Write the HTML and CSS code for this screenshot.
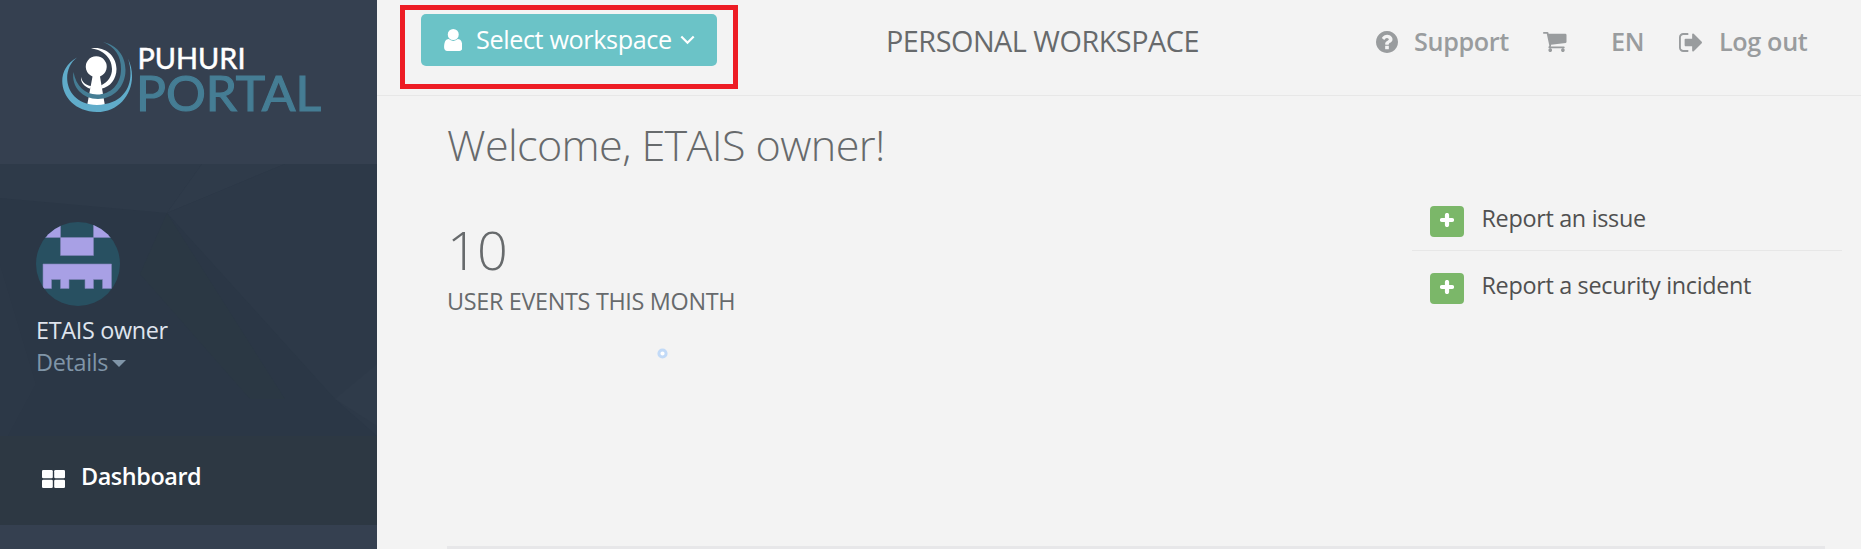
FILE: index.html
```html
<!DOCTYPE html>
<html lang="en">
<head>
<meta charset="utf-8">
<title>Puhuri Portal</title>
<link rel="stylesheet" href="styles.css">
</head>
<body>
<div class="app">
  <aside class="sidebar">
    <div class="brand">
      <svg class="logo" width="270" height="90" viewBox="56 34 270 90">
        <path fill="#fff" d="M92.500 76.500A10.500 10.500 0 1 1 100 76.500L105 106H87Z"/>
        <path fill="#fff" d="M91 48.500C105 46 116.500 56 116.500 69C116.500 79 110 87 101.500 88.800L101 85.500C108 82 112 76.500 112 69C112 58 103 49.500 91 48.500Z"/>
        <path fill="#fff" d="M81 77C82 82 86 85.500 91 86L90.500 88.700C84 87 80.500 82 81 77Z"/>
        <path fill="#457d94" d="M103 42C117 45 125.500 56 125.500 70C125.500 87 113 99 98 99C83 99 71 87 73.500 72C76 86 85 94.500 97 94.500C111 94.500 121 84 121 69C121 56 115 47 103 42Z"/>
        <path fill="#60acca" d="M77 57.500C60 70 64 104.500 97 105C128 104 135 80 128 58.500C140 84 124 112 97 112C62 112 50 72 77 57.500Z"/>
        <text class="logo-top" x="137.500" y="69" textLength="108" lengthAdjust="spacingAndGlyphs">PUHURI</text>
        <text class="logo-bottom" x="136" y="111" textLength="185" lengthAdjust="spacingAndGlyphs">PORTAL</text>
      </svg>
    </div>
    <div class="profile">
      <svg class="facets" viewBox="0 0 377 272" preserveAspectRatio="none">
        <path fill="#2e3a49" d="M0 0H202L167 49L0 34Z"/>
        <path fill="#2f3b4a" d="M202 0H285L167 49Z"/>
        <path fill="#2d3948" d="M285 0H377V272L335 235L167 49Z"/>
        <path fill="#2b3844" d="M167 49L285 235L250 235L140 110Z"/>
        <path fill="#2c3847" d="M0 100L36 220L8 272H0Z"/>
        <path fill="#2f3b4a" d="M377 200L335 235L377 262Z"/>
      </svg>
      <svg class="avatar" width="84" height="84" viewBox="0 0 84 84">
        <clipPath id="round"><circle cx="42" cy="42" r="42"/></clipPath>
        <g clip-path="url(#round)">
          <path fill="#285061" d="M0 0H84V84H0Z"/>
          <path fill="#a8a0e5" stroke="#7f83b8" stroke-width=".6" d="M0 -2H24.500V15.500H0ZM57.500 -2H84V15.500H57.500ZM24.500 15.500H57.500V33.500H24.500ZM7 42H75.500V66.500H66.500V57.500H57.500V66.500H49V57.500H33V66.500H24.500V57.500H15.500V66.500H7Z"/>
        </g>
      </svg>
      <div class="user-name">ETAIS owner</div>
      <div class="details">Details<span class="caret"></span></div>
    </div>
    <a class="menu-item">
      <svg width="23" height="18" viewBox="0 0 23 18" fill="#fff"><rect width="10.800" height="8.300" rx="1.300"/><rect x="12.200" width="10.800" height="8.300" rx="1.300"/><rect y="9.700" width="10.800" height="8.300" rx="1.300"/><rect x="12.200" y="9.700" width="10.800" height="8.300" rx="1.300"/></svg>
      <span>Dashboard</span>
    </a>
  </aside>
  <main class="main">
    <header class="topbar">
      <button class="workspace">
        <svg width="18.500" height="22" viewBox="0 -1408 1280 1536"><path transform="scale(1,-1)" d="M1280 137q0 -109 -62.500 -187t-150.500 -78h-854q-88 0 -150.500 78t-62.500 187q0 85 8.500 160.500t31.500 152t58.500 131t94 89t134.500 34.500q131 -128 313 -128t313 128q76 0 134.500 -34.500t94 -89t58.500 -131t31.500 -152t8.500 -160.500zM1024 1024q0 -159 -112.500 -271.500t-271.500 -112.500t-271.500 112.500t-112.500 271.500t112.500 271.500t271.500 112.500t271.500 -112.500t112.500 -271.500z"/></svg>
        <span class="workspace-label">Select workspace</span>
        <svg class="chevron" width="15" height="10" viewBox="0 0 15 10"><path d="M1.300 1.500L7.500 7.700L13.700 1.500"/></svg>
      </button>
      <div class="highlight"></div>
      <div class="title">PERSONAL WORKSPACE</div>
      <nav class="nav">
        <svg class="i-help" width="22" height="22" viewBox="0 -1408 1536 1536"><path transform="scale(1,-1)" d="M896 160v192q0 14 -9 23t-23 9h-192q-14 0 -23 -9t-9 -23v-192q0 -14 9 -23t23 -9h192q14 0 23 9t9 23zM1152 832q0 88 -55.500 163t-138.500 116t-170 41q-243 0 -371 -213q-15 -24 8 -42l132 -100q7 -6 19 -6q16 0 25 12q53 68 86 92q34 24 86 24q48 0 85.500 -26t37.500 -59q0 -38 -20 -61t-68 -45q-63 -28 -115.500 -86.500t-52.500 -125.500v-36q0 -14 9 -23t23 -9h192q14 0 23 9t9 23q0 19 21.500 49.500t54.500 49.500q32 18 49 28.500t46 35t44.500 48t28 60.500t12.500 81zM1536 640q0 -209 -103 -385.500t-279.500 -279.500t-385.500 -103t-385.500 103t-279.500 279.500t-103 385.500t103 385.500t279.500 279.500t385.500 103t385.500 -103t279.500 -279.500t103 -385.500z"/></svg>
        <span class="n-support">Support</span>
        <svg class="i-cart" width="23.500" height="20" viewBox="0 -1280 1664 1408"><path transform="scale(1,-1)" d="M640 0q0 -52 -38 -90t-90 -38t-90 38t-38 90t38 90t90 38t90 -38t38 -90zM1536 0q0 -52 -38 -90t-90 -38t-90 38t-38 90t38 90t90 38t90 -38t38 -90zM1664 1088v-512q0 -24 -16.500 -42.500t-40.500 -21.500l-1044 -122q13 -60 13 -70q0 -16 -24 -64h920q26 0 45 -19t19 -45t-19 -45t-45 -19h-1024q-26 0 -45 19t-19 45q0 11 8 31.500t16 36t21.500 40t15.500 29.500l-177 823h-204q-26 0 -45 19t-19 45t19 45t45 19h256q16 0 28.500 -6.500t19.500 -15.500t13 -24.500t8 -26t5.500 -29.500t4.500 -26h1201q26 0 45 -19t19 -45z"/></svg>
        <span class="n-lang">EN</span>
        <svg class="i-out" width="23" height="19" viewBox="0 -1280 1568 1280"><path transform="scale(1,-1)" d="M640 96q0 -4 1 -20t0.500 -26.500t-3 -23.500t-10 -19.500t-20.500 -6.500h-320q-119 0 -203.500 84.500t-84.500 203.500v704q0 119 84.500 203.500t203.500 84.500h320q13 0 22.500 -9.500t9.500 -22.500q0 -4 1 -20t0.500 -26.500t-3 -23.500t-10 -19.500t-20.500 -6.500h-320q-66 0 -113 -47t-47 -113v-704q0 -66 47 -113t113 -47h288h11h13t11.500 -1t11.500 -3t8 -5.500t7 -9t2 -13.500zM1568 640q0 -26 -19 -45l-544 -544q-19 -19 -45 -19t-45 19t-19 45v288h-448q-26 0 -45 19t-19 45v384q0 26 19 45t45 19h448v288q0 26 19 45t45 19t45 -19l544 -544q19 -19 19 -45z"/></svg>
        <span class="n-logout">Log out</span>
      </nav>
    </header>
    <section class="content">
      <div class="summary">
        <h1 class="welcome">Welcome, ETAIS owner!</h1>
        <div class="count">10</div>
        <div class="count-label">USER EVENTS THIS MONTH</div>
        <svg class="loader" width="11" height="11" viewBox="0 0 11 11"><circle cx="5.500" cy="5.500" r="3.600" fill="#fff" stroke="#c2daf7" stroke-width="3"/></svg>
      </div>
      <div class="actions">
        <div class="action">
          <span class="add"><svg width="14" height="14" viewBox="0 0 14 14"><path d="M7 2V12M2 7H12"/></svg></span>
          <span class="action-label">Report an issue</span>
        </div>
        <div class="action">
          <span class="add"><svg width="14" height="14" viewBox="0 0 14 14"><path d="M7 2V12M2 7H12"/></svg></span>
          <span class="action-label">Report a security incident</span>
        </div>
      </div>
    </section>
    <div class="rule"></div>
  </main>
</div>
</body>
</html>
```
FILE: styles.css
```css
* { box-sizing: border-box; }
body { margin: 0; font-family: "Open Sans", sans-serif; font-size: 23.4px; line-height: 32px; letter-spacing: -0.32px; color: #676a6c; background: #f3f3f3; }
svg { display: block; flex: none; }
.app { display: flex; width: 1861px; height: 549px; overflow: hidden; }
.sidebar { width: 377px; flex: none; background: #354050; }
.brand { height: 164px; padding: 34px 0 0 56px; }
.logo text { font-family: Lato, sans-serif; letter-spacing: 0; }
.logo .logo-top { font-size: 28.500px; fill: #fff; stroke: #fff; stroke-width: 0.5px; }
.logo .logo-bottom { font-size: 49px; fill: #457d94; stroke: #457d94; stroke-width: 1.2px; }
.profile { position: relative; height: 272px; padding: 58px 36px 0; background: #2b3746; }
.facets { position: absolute; inset: 0; width: 377px; height: 272px; }
.avatar { position: relative; margin-bottom: 8px; }
.user-name { position: relative; color: #dfe4ed; white-space: nowrap; }
.details { position: relative; display: flex; align-items: center; color: #8095a8; }
.caret { margin: 3px 0 0 4px; border: 7px solid transparent; border-top-color: #8095a8; border-bottom: 0; }
.menu-item { display: flex; align-items: center; gap: 16px; height: 89px; padding: 0 42px; color: #fff; font-weight: 600; letter-spacing: -0.42px; background: #2d3843; }
.menu-item svg { margin-top: -3px; }
.menu-item span { margin-top: -9px; }
.main { display: flex; flex-direction: column; width: 1484px; }
.topbar { position: relative; display: flex; align-items: flex-start; height: 96px; flex: none; border-bottom: 1px solid #e7e7e7; white-space: nowrap; }
.workspace { display: flex; align-items: center; width: 296px; height: 52px; margin: 14px 0 0 44px; padding: 0 0 0 22.500px; border: 0; border-radius: 5px; background: #6bc3c7; color: #fff; fill: #fff; font: 25.200px/50px "Open Sans", sans-serif; letter-spacing: -0.38px; }
.workspace-label { width: 197px; margin: -2px 7px 0 14px; text-align: left; }
.chevron path { fill: none; stroke: #fff; stroke-width: 2.200; }
.highlight { position: absolute; left: 23px; top: 5px; width: 338px; height: 84px; border: 5px solid #ed1c24; }
.title { width: 319px; margin: 21px 0 0 169px; font-size: 28.800px; line-height: 40px; letter-spacing: -0.48px; }
.nav { display: flex; align-items: center; height: 40px; margin: 22px 0 0 171px; color: #999c9e; fill: #999c9e; font-size: 25.200px; font-weight: 600; letter-spacing: -0.36px; }
.nav span { line-height: 38px; margin-top: -2px; }
.n-support { width: 113px; margin-left: 16px; }
.i-cart { margin-left: 16px; }
.n-lang { width: 50px; margin-left: 44.5px; }
.i-out { margin-left: 18px; }
.n-logout { margin-left: 17px; }
.content { display: flex; height: 450px; padding-left: 70px; }
.summary { width: 965px; }
.welcome { margin: 19px 0 0; font-size: 43.200px; line-height: 60px; font-weight: 300; letter-spacing: -0.65px; }
.count { margin-top: 44px; font-size: 54px; line-height: 60px; font-weight: 300; letter-spacing: -0.8px; }
.count-label { margin-top: 6px; }
.loader { margin: 31px 0 0 210px; }
.actions { width: 430px; padding-top: 88px; }
.action { display: flex; height: 67px; padding: 22px 18px 0; border-bottom: 1px solid #e7e7e7; }
.action + .action { border-bottom: 0; padding-top: 22px; }
.add { display: flex; align-items: center; justify-content: center; width: 34px; height: 31px; padding-bottom: 3px; border-radius: 4px; background: #7bb769; }
.add path { fill: none; stroke: #fff; stroke-width: 4.200; stroke-linecap: round; }
.action-label { margin: -4px 0 0 17.5px; color: #505050; }
.rule { flex: none; width: 1378px; height: 3px; margin-left: 70px; background: #e7e7e9; }
```
